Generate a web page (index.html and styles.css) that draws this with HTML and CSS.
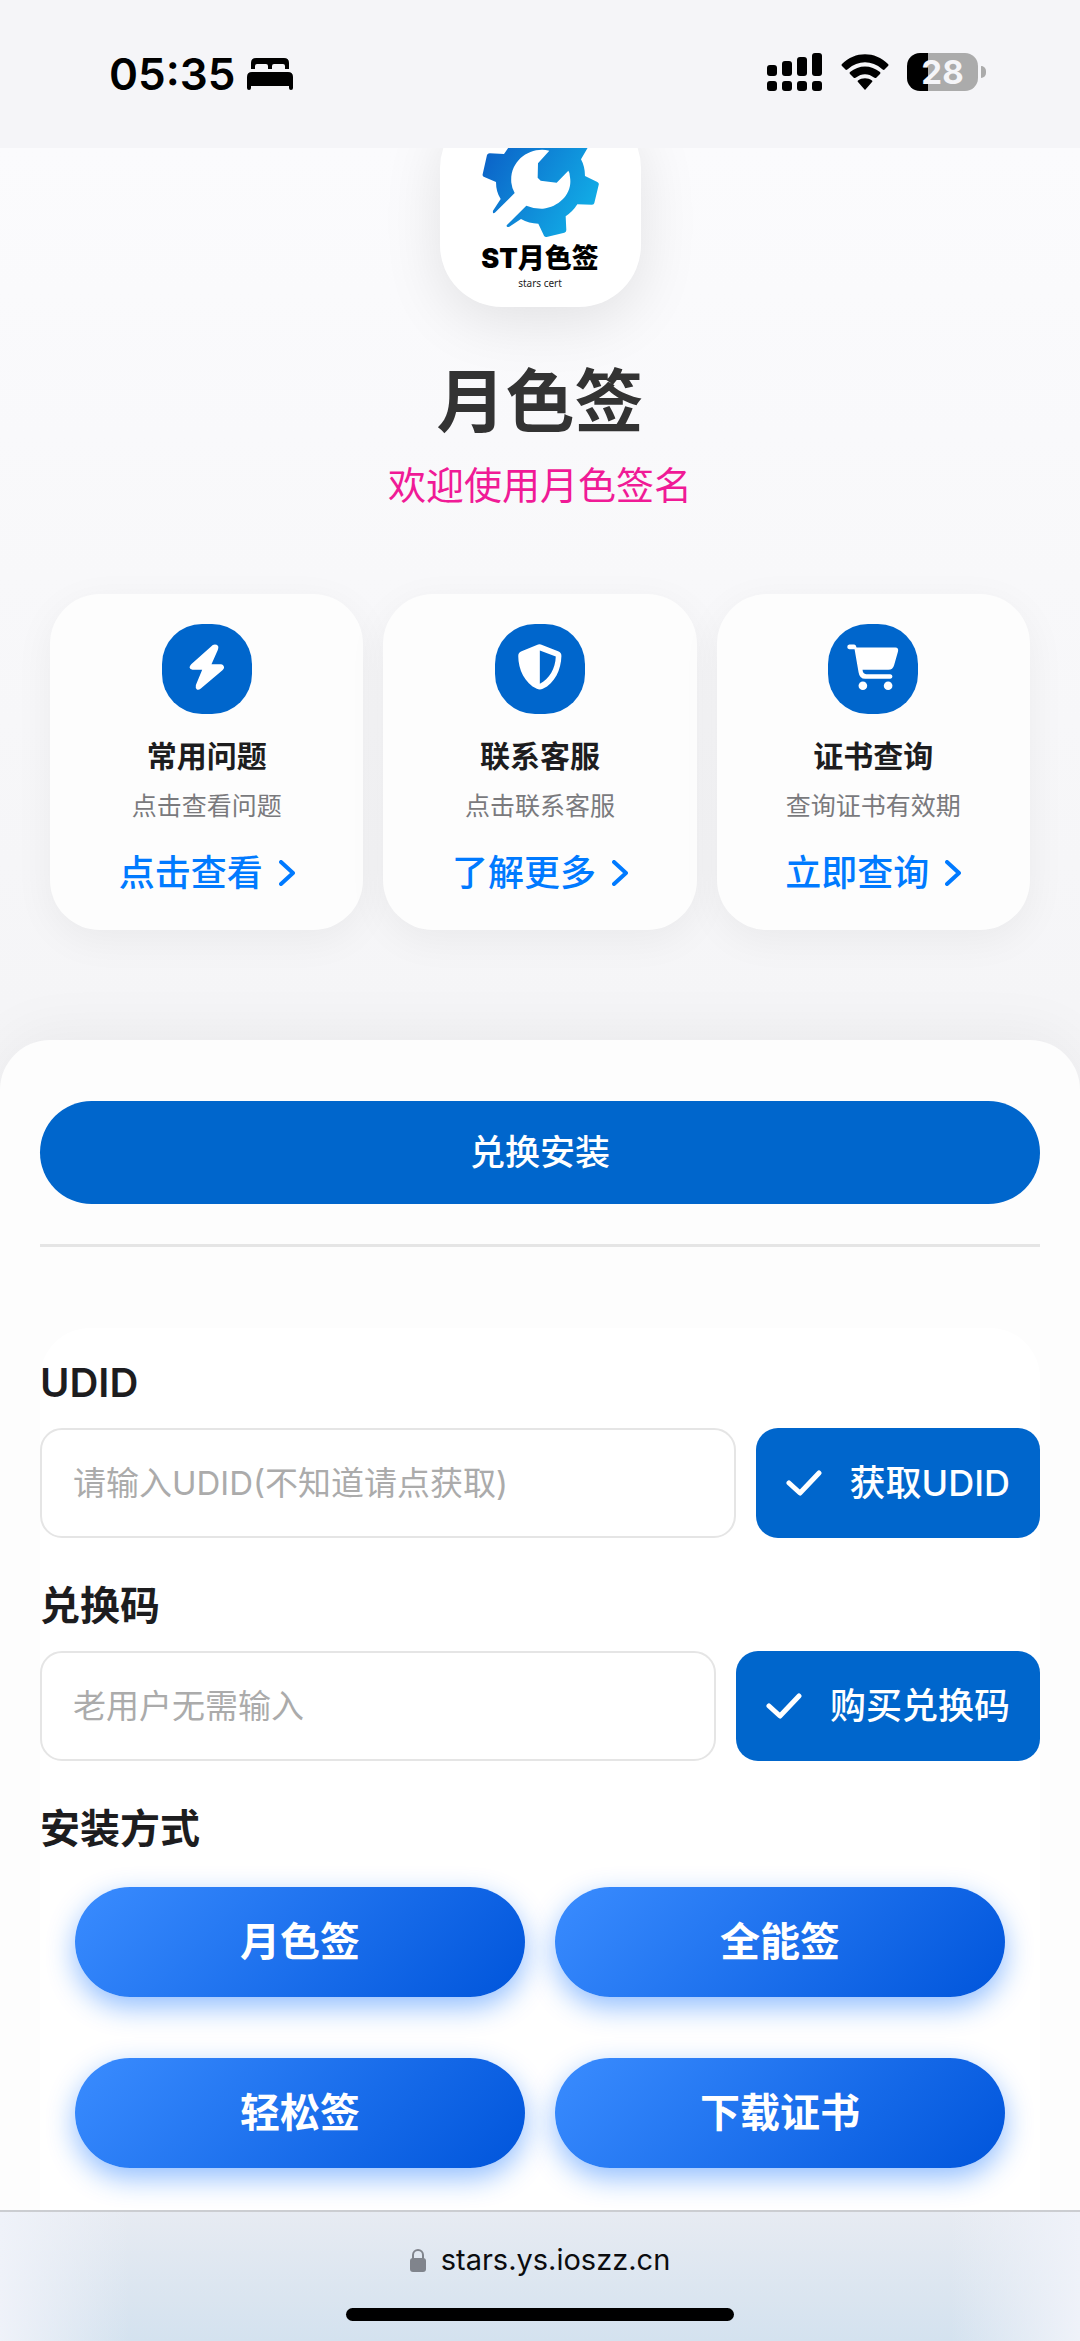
FILE: index.html
```html
<!DOCTYPE html>
<html lang="zh-CN">
<head>
<meta charset="utf-8">
<meta name="viewport" content="width=device-width, initial-scale=1">
<title>月色签</title>
<link rel="stylesheet" href="styles.css">
</head>
<body>
<header class="status">
  <div class="status-left">
    <span class="clock">05:35</span>
    <svg class="bed" viewBox="0 0 46 32" aria-hidden="true">
      <path d="M4 11V5Q4 0 9 0H37Q42 0 42 5V11H38V8Q38 6 36 6H27Q25 6 25 8V11H21V8Q21 6 19 6H10Q8 6 8 8V11Z"/>
      <path d="M0 30V19Q0 14 5 14H41Q46 14 46 19V30Q46 32 44 32T42 30V28H4V30Q4 32 2 32T0 30Z"/>
    </svg>
  </div>
  <div class="status-right">
    <svg class="signal" viewBox="0 0 56 38" aria-hidden="true">
      <rect x="0" y="12" width="10" height="11" rx="3"/><rect x="15" y="8" width="10" height="15" rx="3"/>
      <rect x="30" y="4" width="10" height="19" rx="3"/><rect x="45" y="0" width="10" height="23" rx="3"/>
      <rect x="0" y="28" width="10" height="10" rx="3"/><rect x="15" y="28" width="10" height="10" rx="3"/>
      <rect x="30" y="28" width="10" height="10" rx="3"/><rect x="45" y="28" width="10" height="10" rx="3"/>
    </svg>
    <svg class="wifi" viewBox="0 0 48 36" aria-hidden="true">
      <path d="M1 10Q0 11 1 12L5 16Q6 16 7 15C17 6 31 6 41 15Q42 16 43 16L47 12Q48 11 47 10C34-3 14-3 1 10Z"/>
      <path d="M9 18Q8 19 9 20L13 24Q14 24 15 23.500C20.500 19 27.500 19 33 23.500Q34 24 35 24L39 20Q40 19 39 18C30 10.500 18 10.500 9 18Z"/>
      <path d="M17 28Q16 27 17 26.500C21 23.500 27 23.500 31 26.500Q32 27 31 28L24.500 35.500Q24 36 23.500 35.500Z"/>
    </svg>
    <span class="battery"><span class="battery-level">28</span></span>
  </div>
</header>

<main class="page">
  <section class="hero">
    <div class="logo">
      <svg class="logo-mark" viewBox="118 -72 603 603" aria-hidden="true">
        <defs><linearGradient id="gear" x1="0" y1="0.200" x2="1" y2="0.800"><stop offset="0" stop-color="#0b5ec6"/><stop offset="1" stop-color="#12b1e8"/></linearGradient></defs>
        <path fill="url(#gear)" d="M246 133L259 75Q261 70 267 70L310 72L328 46L320-5L372-36L410-5L460-5L500-36L563-10V50L541 88Q553 110 553 138L590 156Q596 159 594 165L581 219Q580 224 574 224L530 223Q517 244 495 259L497 300Q497 306 491 308L438 321Q433 322 430 317L413 281Q385 281 361 267L326 290Q317 294 318 286L377 227Q400 237 427 236C478 230 516 188 508 142Q508 128 503 122L468 158L420 152L411 143L412 100L446 62C388 48 326 92 332 158Q334 176 342 189L284 247Q275 254 277 242L300 207Q286 186 286 156L249 140Q245 138 246 133Z"/>
      </svg>
      <span class="logo-name">ST月色签</span>
      <span class="logo-sub">stars cert</span>
    </div>
    <h1 class="title">月色签</h1>
    <p class="subtitle">欢迎使用月色签名</p>
  </section>

  <section class="cards">
    <article class="card">
      <svg class="card-icon" viewBox="0 0 271 271" aria-hidden="true">
        <path d="M153 63Q163 60 169 66Q171 70 168 78L149 121H177Q186 122 187 131Q187 134 182 139L117 194Q110 200 105 197Q100 194 102 184L121 138H92Q84 137 83 131Q83 126 88 121Z"/>
      </svg>
      <h2 class="card-title">常用问题</h2>
      <p class="card-text">点击查看问题</p>
      <a class="card-link" href="#faq">点击查看<svg class="chevron" viewBox="0 0 16 26" aria-hidden="true"><path d="M2 2L14 13L2 24"/></svg></a>
    </article>
    <article class="card">
      <svg class="card-icon" viewBox="0 0 271 271" aria-hidden="true">
        <path fill-rule="evenodd" d="M126 63Q134 59 142 63L190 82Q200 86 200 96C199 137 180 178 144 195Q135 199 126 195C90 178 70 137 70 96Q70 86 80 82ZM135 80V180C163 166 182 135 183 98Z"/>
      </svg>
      <h2 class="card-title">联系客服</h2>
      <p class="card-text">点击联系客服</p>
      <a class="card-link" href="#service">了解更多<svg class="chevron" viewBox="0 0 16 26" aria-hidden="true"><path d="M2 2L14 13L2 24"/></svg></a>
    </article>
    <article class="card">
      <svg class="card-icon" viewBox="0 0 271 271" aria-hidden="true">
        <path d="M64 62H79Q84 62 86 71H203Q213 72 211 82L199 124Q195 138 182 138H104Q105 151 115 151H188Q194 152 194 158T188 165H112Q95 165 92 145L80 76H64Q58 75 58 69T64 62Z"/>
        <circle cx="105" cy="186" r="13"/><circle cx="181" cy="186" r="13"/>
      </svg>
      <h2 class="card-title">证书查询</h2>
      <p class="card-text">查询证书有效期</p>
      <a class="card-link" href="#query">立即查询<svg class="chevron" viewBox="0 0 16 26" aria-hidden="true"><path d="M2 2L14 13L2 24"/></svg></a>
    </article>
  </section>

  <section class="panel">
    <button class="redeem" type="button">兑换安装</button>
    <hr class="rule">
    <form class="form">
      <label class="label" for="udid">UDID</label>
      <div class="row">
        <input class="field" id="udid" type="text" placeholder="请输入UDID(不知道请点获取)">
        <button class="action" type="button"><svg class="check" viewBox="0 0 36 26" aria-hidden="true"><path d="M3 13L14 23L33 3"/></svg>获取UDID</button>
      </div>
      <label class="label" for="code">兑换码</label>
      <div class="row">
        <input class="field" id="code" type="text" placeholder="老用户无需输入">
        <button class="action" type="button"><svg class="check" viewBox="0 0 36 26" aria-hidden="true"><path d="M3 13L14 23L33 3"/></svg>购买兑换码</button>
      </div>
      <h2 class="label">安装方式</h2>
      <div class="methods">
        <button class="method" type="button">月色签</button>
        <button class="method" type="button">全能签</button>
        <button class="method" type="button">轻松签</button>
        <button class="method" type="button">下载证书</button>
      </div>
    </form>
  </section>
</main>

<footer class="browser-bar">
  <div class="address">
    <svg class="lock" viewBox="0 0 16 24" aria-hidden="true"><path d="M3 11V7a5 5 0 0 1 10 0v4" fill="none" stroke="#80848c" stroke-width="2"/><rect y="10" width="16" height="14" rx="3" fill="#80848c"/></svg>
    <span>stars.ys.ioszz.cn</span>
  </div>
  <div class="home-indicator"></div>
</footer>
</body>
</html>
```
FILE: styles.css
```css
* {
  box-sizing: border-box;
}

body {
  margin: 0;
  min-height: 100vh;
  display: flex;
  flex-direction: column;
  background: #f5f5f8;
  color: #1d1d1f;
  font-family: Inter, "Noto Sans CJK SC", sans-serif;
}

h1, h2, p {
  margin: 0;
}

button, input {
  font-family: inherit;
}

button {
  border: 0;
  padding: 0;
  color: #fff;
  background: #0066cc;
}

/* Status bar */
.status {
  display: flex;
  justify-content: space-between;
  padding: 44px 94px 44px 109px;
  color: #000;
}

.status-left, .status-right {
  display: flex;
  align-items: center;
  height: 60px;
}

.status-left {
  gap: 12px;
}

.status-right {
  gap: 18px;
  height: 56px;
}

.clock {
  font-size: 44px;
  line-height: 60px;
  font-weight: 600;
}

.bed {
  width: 46px;
  height: 32px;
}

.signal {
  width: 56px;
  height: 38px;
}

.wifi {
  width: 48px;
  height: 36px;
}

.battery {
  display: flex;
  align-items: center;
  gap: 3px;
}

.battery::after {
  content: "";
  width: 5px;
  height: 12px;
  border-radius: 0 6px 6px 0;
  background: #ababab;
}

.battery-level {
  width: 71px;
  border-radius: 13px;
  background: linear-gradient(90deg, #000 29%, #ababab 29%);
  color: #f5f5f8;
  font-size: 33px;
  line-height: 38px;
  font-weight: 700;
  text-align: center;
}

/* Hero */
.page {
  flex: 1;
  display: flex;
  flex-direction: column;
  overflow: hidden;
  background: linear-gradient(#fbfbfd, #f4f4f6 1000px);
}

.hero {
  display: flex;
  flex-direction: column;
  align-items: center;
}

.logo {
  position: relative;
  display: flex;
  flex-direction: column;
  align-items: center;
  justify-content: flex-end;
  width: 201px;
  height: 201px;
  margin-top: -42px;
  padding-bottom: 15px;
  border-radius: 62px;
  background: #fff;
  box-shadow: 0 14px 60px rgba(0, 0, 0, 0.1);
}

.logo-mark {
  position: absolute;
  inset: 0;
}

.logo-name {
  color: #000;
  font-size: 27px;
  line-height: 32px;
  font-weight: 900;
}

.logo-sub {
  color: #222;
  font-family: "Noto Sans", sans-serif;
  font-size: 10px;
  line-height: 17px;
}

.title {
  margin-top: 53px;
  color: #333;
  font-size: 69px;
  line-height: 84px;
  font-weight: 600;
}

.subtitle {
  margin-top: 16px;
  color: #f01a96;
  font-size: 38px;
  line-height: 50px;
}

/* Shortcut cards */
.cards {
  display: grid;
  grid-template-columns: repeat(3, 1fr);
  gap: 20px;
  margin: 84px 50px 110px;
}

.card {
  display: flex;
  flex-direction: column;
  align-items: center;
  padding: 30px 10px 33px;
  border-radius: 50px;
  background: #fdfdfd;
  box-shadow: 0 10px 40px rgba(0, 0, 0, 0.05);
}

.card-icon {
  width: 90px;
  height: 90px;
  border-radius: 40px;
  background: #0066cc;
  fill: #fff;
}

.card-title {
  margin-top: 20px;
  font-size: 30px;
  line-height: 44px;
  font-weight: 600;
}

.card-text {
  margin-top: 10px;
  color: #7a7a7d;
  font-size: 25px;
  line-height: 36px;
}

.card-link {
  display: flex;
  align-items: center;
  gap: 16px;
  margin-top: 25px;
  color: #007aff;
  font-size: 36px;
  line-height: 48px;
  font-weight: 500;
  text-decoration: none;
}

.chevron {
  width: 16px;
  height: 26px;
  fill: none;
  stroke: currentColor;
  stroke-width: 4;
  stroke-linecap: round;
  stroke-linejoin: round;
}

/* Redeem panel */
.panel {
  flex: 1;
  padding: 61px 40px 0;
  border-radius: 50px 50px 0 0;
  background: #fdfdfd;
  box-shadow: 0 -6px 60px rgba(0, 0, 0, 0.05);
}

.redeem {
  display: block;
  width: 100%;
  border-radius: 52px;
  font-size: 35px;
  line-height: 103px;
  font-weight: 500;
}

.rule {
  height: 3px;
  margin: 40px 0 81px;
  border: 0;
  background: #e5e5e5;
}

.form {
  padding: 30px 0 42px;
  border-radius: 50px 50px 0 0;
  background: #fff;
}

.label {
  display: block;
  margin-bottom: 20px;
  font-size: 40px;
  line-height: 50px;
  font-weight: 600;
}

.row {
  display: flex;
  gap: 20px;
  margin-bottom: 43px;
}

.field {
  flex: 1;
  min-width: 0;
  height: 110px;
  padding: 0 31px;
  border: 2px solid #e5e5e5;
  border-radius: 22px;
  background: #fff;
  font-size: 33px;
}

.field::placeholder {
  color: #ababab;
  opacity: 1;
}

.action {
  display: flex;
  align-items: center;
  gap: 28px;
  padding: 0 30px;
  border-radius: 22px;
  font-size: 36px;
  line-height: 110px;
  font-weight: 500;
}

.check {
  width: 36px;
  height: 26px;
  fill: none;
  stroke: currentColor;
  stroke-width: 5;
  stroke-linecap: round;
  stroke-linejoin: round;
}

.methods {
  display: grid;
  grid-template-columns: 1fr 1fr;
  gap: 61px 30px;
  padding: 13px 35px 0;
}

.method {
  border-radius: 55px;
  background: linear-gradient(135deg, #3a8cff, #0055db);
  box-shadow: 0 10px 28px rgba(10, 110, 255, 0.45);
  font-size: 40px;
  line-height: 110px;
  font-weight: 600;
}

/* Browser toolbar */
.browser-bar {
  display: flex;
  flex-direction: column;
  align-items: center;
  gap: 28px;
  padding: 28px 0 20px;
  border-top: 2px solid #cbcdd1;
  background:
    linear-gradient(90deg, #eff2f9, rgba(239, 242, 249, 0) 12%, rgba(239, 242, 249, 0) 88%, #eff2f9),
    linear-gradient(#e7ebf2, #d4e2ef);
}

.address {
  display: flex;
  align-items: center;
  gap: 15px;
  color: #0b0c0e;
  font-size: 29px;
  line-height: 40px;
}

.lock {
  width: 16px;
  height: 24px;
}

.home-indicator {
  width: 36%;
  height: 13px;
  border-radius: 7px;
  background: #000;
}
```
